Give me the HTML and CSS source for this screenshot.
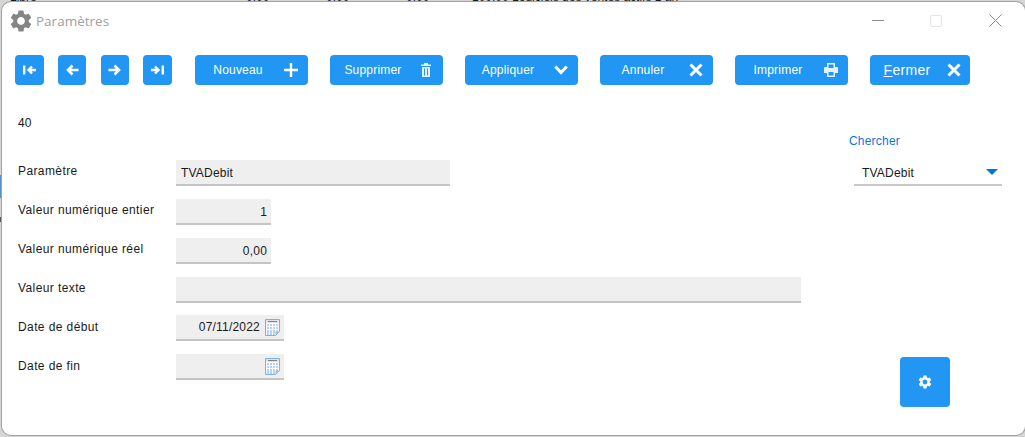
FILE: index.html
```html
<!DOCTYPE html>
<html lang="fr">
<head>
    <meta charset="UTF-8">
    <meta name="viewport" content="width=device-width, initial-scale=1.0">
    <title>Paramètres</title>
    <link rel="stylesheet" href="styles.css">
</head>
<body>
    <svg class="defs" aria-hidden="true">
        <symbol id="gear" viewBox="0 0 24 24">
            <path fill-rule="evenodd" d="M19.14 12.94c.04-.3.06-.61.06-.94 0-.32-.02-.64-.07-.94l2.03-1.58a.49.49 0 0 0 .12-.61l-1.92-3.32a.488.488 0 0 0-.59-.22l-2.39.96c-.5-.38-1.03-.7-1.62-.94l-.36-2.54a.484.484 0 0 0-.48-.41h-3.84c-.24 0-.43.17-.47.41l-.36 2.54c-.59.24-1.13.57-1.62.94l-2.39-.96c-.22-.08-.47 0-.59.22L2.74 8.87c-.12.21-.08.47.12.61l2.03 1.58c-.05.3-.09.63-.09.94s.02.64.07.94l-2.03 1.58a.49.49 0 0 0-.12.61l1.92 3.32c.12.22.37.29.59.22l2.39-.96c.5.38 1.03.7 1.62.94l.36 2.54c.05.24.24.41.48.41h3.84c.24 0 .44-.17.47-.41l.36-2.54c.59-.24 1.13-.56 1.62-.94l2.39.96c.22.08.47 0 .59-.22l1.92-3.32c.12-.22.07-.47-.12-.61l-2.01-1.58zM12 15.6c-1.98 0-3.6-1.62-3.6-3.6s1.62-3.6 3.6-3.6 3.6 1.62 3.6 3.6-1.62 3.6-3.6 3.6z"/>
        </symbol>
        <symbol id="cross" viewBox="0 0 16 16">
            <path d="M2.5 2.5l11 11M13.5 2.5l-11 11" fill="none" stroke="currentColor" stroke-width="3"/>
        </symbol>
        <symbol id="calendar" viewBox="0 0 15 17">
            <path d="M.5.5h14v12l-4 4h-10z" fill="#fff" stroke="#7fb0da"/>
            <path d="M1 1h13v3H1z" fill="#dfe3e8"/>
            <path d="M3 2.500h9" stroke="#7d838a"/>
            <path d="M2 5h11v8h-3v3H2z" fill="#b5d3fa"/>
            <path d="M4.500 5v11M7.500 5v11M10.500 5v8M2 7.500h11M2 10.500h11" stroke="#fff"/>
            <path d="M10.500 16v-3.500h4z" fill="#b4b8bd"/>
        </symbol>
    </svg>

    <!-- what shows of the list behind the dialog -->
    <div class="behind">
        <span class="behind-cell behind-first">Libre</span>
        <span class="behind-cell behind-num">0,00</span>
        <span class="behind-cell behind-num">0,00</span>
        <span class="behind-cell behind-num">0,00</span>
        <span class="behind-cell behind-wide">100,00 Logiciels des ventes actifs 1 an</span>
    </div>
    <div class="behind-mark"></div>
    <div class="behind-mark behind-mark-dark"></div>

    <div class="window">
        <div class="titlebar">
            <svg class="title-icon"><use href="#gear"/></svg>
            <span class="title-text">Paramètres</span>
            <div class="win-controls">
                <span class="win-min"></span>
                <span class="win-max"></span>
                <svg class="win-close" viewBox="0 0 13 13"><path d="M.5.5l12 12M12.500.5l-12 12"/></svg>
            </div>
        </div>

        <div class="toolbar">
            <div class="nav-group">
                <button class="btn btn-nav btn-wide-nav">
                    <svg viewBox="0 0 13 12"><path d="M1.200 1.500v9" stroke-width="2.400"/><path d="M13 6H5.500M9 2.500L5.500 6 9 9.500" stroke-width="2.400"/></svg>
                </button>
                <button class="btn btn-nav">
                    <svg viewBox="0 0 13 12"><path d="M12.500 6H2M6.500 1.500L2 6l4.500 4.500" stroke-width="2.600"/></svg>
                </button>
                <button class="btn btn-nav">
                    <svg viewBox="0 0 13 12"><path d="M.5 6H11M6.500 1.500L11 6l-4.500 4.500" stroke-width="2.600"/></svg>
                </button>
                <button class="btn btn-nav btn-wide-nav">
                    <svg viewBox="0 0 13 12"><path d="M11.800 1.500v9" stroke-width="2.400"/><path d="M0 6h7.500M4 2.500L7.500 6 4 9.500" stroke-width="2.400"/></svg>
                </button>
            </div>
            <div class="action-group">
                <button class="btn btn-action">
                    <span class="btn-label">Nouveau</span>
                    <svg class="btn-icon" viewBox="0 0 14 14"><path d="M7 0v14M0 7h14" stroke-width="2.400"/></svg>
                </button>
                <button class="btn btn-action">
                    <span class="btn-label">Supprimer</span>
                    <svg class="btn-icon btn-icon-soft" viewBox="0 0 12 14"><path class="solid" d="M1 1.500h10V3H1zM4 0h4v1.500H4zM2 4h8v10H2z"/><path d="M4.500 5.500v7M7.500 5.500v7" stroke="#2196f3" stroke-width="1"/></svg>
                </button>
                <button class="btn btn-action">
                    <span class="btn-label">Appliquer</span>
                    <svg class="btn-icon btn-icon-check" viewBox="0 0 14 10"><path d="M1.300 1.500L7 7.500l5.700-6" stroke-width="3"/></svg>
                </button>
                <button class="btn btn-action">
                    <span class="btn-label">Annuler</span>
                    <svg class="btn-icon btn-icon-x"><use href="#cross"/></svg>
                </button>
                <button class="btn btn-action">
                    <span class="btn-label">Imprimer</span>
                    <svg class="btn-icon btn-icon-soft" viewBox="0 0 14 14"><path class="solid" fill-rule="evenodd" d="M3 0h8v4h2a1 1 0 0 1 1 1v5h-3v4H3v-4H0V5a1 1 0 0 1 1-1h2zM4.500 1.500V5h5V1.500zM4.500 9v3.500h5V9z"/></svg>
                </button>
                <button class="btn btn-action btn-close">
                    <span class="btn-label"><u>F</u>ermer</span>
                    <svg class="btn-icon btn-icon-x"><use href="#cross"/></svg>
                </button>
            </div>
        </div>

        <div class="content">
            <div class="form">
                <div class="record-id">40</div>
                <div class="form-row">
                    <label class="form-label">Paramètre</label>
                    <div class="field field-name">TVADebit</div>
                </div>
                <div class="form-row">
                    <label class="form-label">Valeur numérique entier</label>
                    <div class="field field-num">1</div>
                </div>
                <div class="form-row">
                    <label class="form-label">Valeur numérique réel</label>
                    <div class="field field-num">0,00</div>
                </div>
                <div class="form-row form-row-short">
                    <label class="form-label">Valeur texte</label>
                    <div class="field field-text"></div>
                </div>
                <div class="form-row form-row-date">
                    <label class="form-label">Date de début</label>
                    <div class="field field-date">07/11/2022<svg class="cal"><use href="#calendar"/></svg></div>
                </div>
                <div class="form-row form-row-date">
                    <label class="form-label">Date de fin</label>
                    <div class="field field-date"><svg class="cal"><use href="#calendar"/></svg></div>
                </div>
            </div>
            <div class="side">
                <div class="search-label">Chercher</div>
                <div class="combo">
                    <span>TVADebit</span>
                    <span class="combo-arrow"></span>
                </div>
                <button class="btn btn-settings">
                    <svg class="settings-icon"><use href="#gear"/></svg>
                </button>
            </div>
        </div>
    </div>
</body>
</html>
```

FILE: styles.css
```css
html, body {
    height: 100%;
}
body {
    margin: 0;
    background-color: #d6d6d6;
    font-family: 'Liberation Sans', Arial, sans-serif;
    font-size: 12px;
    color: #1a1a1a;
    overflow: hidden;
    position: relative;
    box-sizing: border-box;
    padding: 2px 0 2px 2px;
}
.defs {
    position: absolute;
    width: 0;
    height: 0;
}
.behind {
    position: absolute;
    top: -10px;
    left: 10px;
    display: flex;
    font-size: 12px;
    line-height: 14px;
    white-space: nowrap;
}
.behind-cell {
    display: block;
}
.behind-first {
    width: 236px;
}
.behind-num {
    width: 80px;
}
.behind-wide {
    margin-left: -14px;
}
.behind-mark {
    position: absolute;
    left: 0;
    top: 175px;
    width: 2px;
    height: 23px;
    background-color: #5b90bd;
}
.behind-mark-dark {
    top: 217px;
    height: 5px;
    background-color: #555555;
}
.window {
    height: 100%;
    background-color: #ffffff;
    border-radius: 9px;
    box-shadow: 0 0 0 1px #a3a3a3;
    display: flex;
    flex-direction: column;
    position: relative;
}
.titlebar {
    display: flex;
    align-items: center;
    height: 37px;
    padding-left: 8px;
    flex-shrink: 0;
}
.title-icon {
    width: 26px;
    height: 26px;
    fill: #858585;
    margin-left: -2px;
}
.title-text {
    font-family: 'Open Sans', sans-serif;
    font-size: 13.500px;
    color: #a0a0a0;
    margin-left: 2px;
}
.win-controls {
    margin-left: auto;
    display: flex;
    align-items: center;
    padding-right: 23px;
}
.win-min {
    width: 12px;
    height: 1px;
    background-color: #8c8c8c;
    margin-right: 46px;
}
.win-max {
    width: 10px;
    height: 10px;
    border: 1px solid #e4e4e4;
    border-radius: 2px;
    margin-right: 47px;
}
.win-close {
    width: 13px;
    height: 13px;
    fill: none;
    stroke: #8c8c8c;
}
.toolbar {
    display: flex;
    padding: 16px 0 0 13px;
    height: 30px;
    flex-shrink: 0;
}
.nav-group {
    display: flex;
    gap: 14.333px;
}
.action-group {
    display: flex;
    gap: 22px;
    margin-left: 23px;
}
.btn {
    border: none;
    border-radius: 4px;
    background-color: #2196f3;
    color: #ffffff;
    font-family: 'Liberation Sans', Arial, sans-serif;
    font-size: 12px;
    padding: 0;
    display: flex;
    align-items: center;
    justify-content: center;
}
.btn svg {
    fill: none;
    stroke: #ffffff;
}
.btn svg .solid {
    fill: #ffffff;
    stroke: none;
}
.btn-nav {
    width: 28px;
    height: 30px;
}
.btn-wide-nav {
    width: 29px;
}
.btn-nav svg {
    width: 13px;
    height: 12px;
}
.btn-action {
    width: 113px;
    height: 30px;
    padding-right: 7px;
}
.btn-label {
    flex: 1;
    text-align: center;
    letter-spacing: 0.200px;
}
.btn-icon {
    width: 20px;
    height: 14px;
    flex-shrink: 0;
}
.btn-icon-soft {
    opacity: 0.880;
}
.btn-icon-check {
    height: 10px;
}
.btn-icon-x {
    height: 16px;
    color: #ffffff;
}
.btn-close {
    width: 100px;
    padding-right: 6px;
}
.btn-close .btn-label {
    font-size: 14px;
    letter-spacing: 0.300px;
}
.content {
    display: flex;
    flex: 1;
}
.form {
    width: 847px;
    padding: 31px 0 0 16px;
    box-sizing: border-box;
}
.record-id {
    height: 44px;
    line-height: 14px;
}
.form-row {
    display: flex;
    height: 39px;
}
.form-row-short {
    height: 38px;
}
.form-label {
    width: 158px;
    flex-shrink: 0;
    line-height: 22px;
    letter-spacing: 0.400px;
}
.form-row-date .form-label {
    line-height: 24px;
}
.field {
    height: 24px;
    line-height: 27px;
    background-color: #efefef;
    border-bottom: 2px solid #c4c4c4;
    padding: 0 4px 0 5px;
    box-sizing: content-box;
    letter-spacing: 0.200px;
}
.field-name {
    width: 265px;
}
.field-num {
    width: 86px;
    text-align: right;
}
.field-text {
    width: 616px;
}
.field-date {
    width: 108px;
    padding: 0;
    display: flex;
    justify-content: flex-end;
    align-items: center;
}
.cal {
    width: 15px;
    height: 17px;
    margin: 1px 4px 0 5px;
    flex-shrink: 0;
}
.side {
    flex: 1;
    display: flex;
    flex-direction: column;
    padding-top: 49px;
}
.search-label {
    color: #0f74d8;
    line-height: 14px;
    letter-spacing: 0.200px;
}
.combo {
    display: flex;
    justify-content: space-between;
    align-items: center;
    margin: 13px 0 0 5px;
    width: 148px;
    height: 25px;
    box-sizing: border-box;
    padding: 1px 4px 0 8px;
    border-bottom: 2px solid #c8c8c8;
    letter-spacing: 0.200px;
}
.combo-arrow {
    width: 0;
    height: 0;
    border-left: 6px solid transparent;
    border-right: 6px solid transparent;
    border-top: 6px solid #0078d7;
    margin-top: -2px;
}
.btn-settings {
    width: 50px;
    height: 50px;
    margin: 171px 0 0 51px;
}
.settings-icon {
    width: 16px;
    height: 16px;
}
.btn-settings svg {
    fill: #ffffff;
    stroke: none;
}
```
